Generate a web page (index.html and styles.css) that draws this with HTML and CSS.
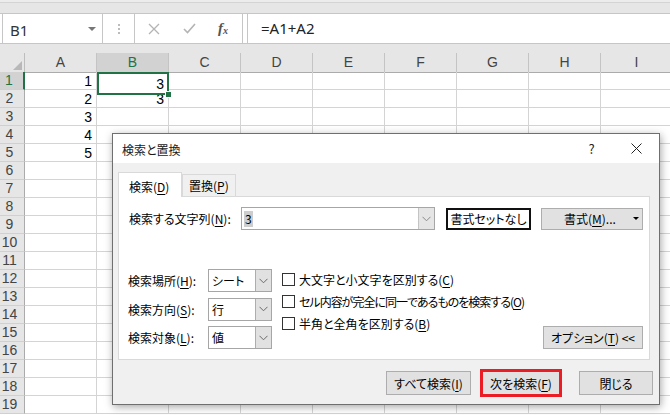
FILE: index.html
```html
<!DOCTYPE html>
<html lang="ja">
<head>
<meta charset="utf-8">
<link rel="stylesheet" href="styles.css">
</head>
<body>
<div class="topstrip"></div>
<div class="fbar">
  <div class="namebox"><span class="nb-text">B1</span><span class="nb-arrow"></span></div>
  <div class="dots"><span></span><span></span><span></span></div>
  <div class="fxbox">
    <svg class="ico" width="12" height="12" viewBox="0 0 12 12"><path d="M1 1L11 11M11 1L1 11" stroke="#b4b4b4" stroke-width="1.3" fill="none"/></svg>
    <svg class="ico" width="13" height="11" viewBox="0 0 13 11"><path d="M1 6L4.5 9.5L12 1" stroke="#b4b4b4" stroke-width="1.6" fill="none"/></svg>
    <span class="fx">f<sub>x</sub></span>
  </div>
  <div class="formula">=A1+A2</div>
</div>
<div class="gapband"></div>
<div class="colhead">
  <div class="corner"><span class="tri"></span></div>
  <div class="ch">A</div><div class="ch on">B</div><div class="ch">C</div><div class="ch">D</div><div class="ch">E</div><div class="ch">F</div><div class="ch">G</div><div class="ch">H</div><div class="ch">I</div>
</div>
<div class="sheet">
  <div class="rh on">1</div><div class="c">1</div><div class="c sel">3<span class="selbox"></span><span class="handle"></span></div><div class="c"></div><div class="c"></div><div class="c"></div><div class="c"></div><div class="c"></div><div class="c"></div><div class="c"></div>
  <div class="rh">2</div><div class="c">2</div><div class="c">3</div><div class="c"></div><div class="c"></div><div class="c"></div><div class="c"></div><div class="c"></div><div class="c"></div><div class="c"></div>
  <div class="rh">3</div><div class="c">3</div><div class="c"></div><div class="c"></div><div class="c"></div><div class="c"></div><div class="c"></div><div class="c"></div><div class="c"></div><div class="c"></div>
  <div class="rh">4</div><div class="c">4</div><div class="c"></div><div class="c"></div><div class="c"></div><div class="c"></div><div class="c"></div><div class="c"></div><div class="c"></div><div class="c"></div>
  <div class="rh">5</div><div class="c">5</div><div class="c"></div><div class="c"></div><div class="c"></div><div class="c"></div><div class="c"></div><div class="c"></div><div class="c"></div><div class="c"></div>
  <div class="rh">6</div><div class="c"></div><div class="c"></div><div class="c"></div><div class="c"></div><div class="c"></div><div class="c"></div><div class="c"></div><div class="c"></div><div class="c"></div>
  <div class="rh">7</div><div class="c"></div><div class="c"></div><div class="c"></div><div class="c"></div><div class="c"></div><div class="c"></div><div class="c"></div><div class="c"></div><div class="c"></div>
  <div class="rh">8</div><div class="c"></div><div class="c"></div><div class="c"></div><div class="c"></div><div class="c"></div><div class="c"></div><div class="c"></div><div class="c"></div><div class="c"></div>
  <div class="rh">9</div><div class="c"></div><div class="c"></div><div class="c"></div><div class="c"></div><div class="c"></div><div class="c"></div><div class="c"></div><div class="c"></div><div class="c"></div>
  <div class="rh">10</div><div class="c"></div><div class="c"></div><div class="c"></div><div class="c"></div><div class="c"></div><div class="c"></div><div class="c"></div><div class="c"></div><div class="c"></div>
  <div class="rh">11</div><div class="c"></div><div class="c"></div><div class="c"></div><div class="c"></div><div class="c"></div><div class="c"></div><div class="c"></div><div class="c"></div><div class="c"></div>
  <div class="rh">12</div><div class="c"></div><div class="c"></div><div class="c"></div><div class="c"></div><div class="c"></div><div class="c"></div><div class="c"></div><div class="c"></div><div class="c"></div>
  <div class="rh">13</div><div class="c"></div><div class="c"></div><div class="c"></div><div class="c"></div><div class="c"></div><div class="c"></div><div class="c"></div><div class="c"></div><div class="c"></div>
  <div class="rh">14</div><div class="c"></div><div class="c"></div><div class="c"></div><div class="c"></div><div class="c"></div><div class="c"></div><div class="c"></div><div class="c"></div><div class="c"></div>
  <div class="rh">15</div><div class="c"></div><div class="c"></div><div class="c"></div><div class="c"></div><div class="c"></div><div class="c"></div><div class="c"></div><div class="c"></div><div class="c"></div>
  <div class="rh">16</div><div class="c"></div><div class="c"></div><div class="c"></div><div class="c"></div><div class="c"></div><div class="c"></div><div class="c"></div><div class="c"></div><div class="c"></div>
  <div class="rh">17</div><div class="c"></div><div class="c"></div><div class="c"></div><div class="c"></div><div class="c"></div><div class="c"></div><div class="c"></div><div class="c"></div><div class="c"></div>
  <div class="rh">18</div><div class="c"></div><div class="c"></div><div class="c"></div><div class="c"></div><div class="c"></div><div class="c"></div><div class="c"></div><div class="c"></div><div class="c"></div>
  <div class="rh">19</div><div class="c"></div><div class="c"></div><div class="c"></div><div class="c"></div><div class="c"></div><div class="c"></div><div class="c"></div><div class="c"></div><div class="c"></div>
</div>

<div class="dialog">
  <div class="titlebar">
    <span class="title">検索と置換</span>
    <span class="help">?</span>
    <span class="close"><svg width="11" height="11" viewBox="0 0 11 11"><path d="M0.5 0.5L10.5 10.5M10.5 0.5L0.5 10.5" stroke="#222" stroke-width="1" fill="none"/></svg></span>
  </div>
  <div class="dbody">
    <div class="tabs">
      <div class="tab active">検索(<u>D</u>)</div>
      <div class="tab">置換(<u>P</u>)</div>
    </div>
    <div class="panel">
      <div class="findrow">
        <span class="lbl findlbl">検索する文字列(<u>N</u>):</span>
        <div class="combo">
          <span class="combo-val"><span class="hl">3</span></span>
          <span class="ddbtn"><svg width="9" height="6" viewBox="0 0 9 6"><path d="M0.5 0.8L4.5 4.8L8.5 0.8" stroke="#8a8a8a" stroke-width="1" fill="none"/></svg></span>
        </div>
        <div class="btn nofmt">書式セットなし</div>
        <div class="btn fmt"><span>書式(<u>M</u>)...</span><span class="caret"></span></div>
      </div>
      <div class="opts">
        <div class="selgrid">
          <span class="lbl">検索場所(<u>H</u>):</span>
          <div class="sel"><span class="sel-val">シート</span><span class="ddbtn"><svg width="9" height="6" viewBox="0 0 9 6"><path d="M0.5 0.8L4.5 4.8L8.5 0.8" stroke="#6a6a6a" stroke-width="1" fill="none"/></svg></span></div>
          <span class="lbl">検索方向(<u>S</u>):</span>
          <div class="sel"><span class="sel-val">行</span><span class="ddbtn"><svg width="9" height="6" viewBox="0 0 9 6"><path d="M0.5 0.8L4.5 4.8L8.5 0.8" stroke="#6a6a6a" stroke-width="1" fill="none"/></svg></span></div>
          <span class="lbl">検索対象(<u>L</u>):</span>
          <div class="sel"><span class="sel-val">値</span><span class="ddbtn"><svg width="9" height="6" viewBox="0 0 9 6"><path d="M0.5 0.8L4.5 4.8L8.5 0.8" stroke="#6a6a6a" stroke-width="1" fill="none"/></svg></span></div>
        </div>
        <div class="checks">
          <div class="chk"><span class="box"></span><span>大文字と小文字を区別する(<u>C</u>)</span></div>
          <div class="chk"><span class="box"></span><span class="tight">セル内容が完全に同一であるものを検索する(<u>O</u>)</span></div>
          <div class="chk"><span class="box"></span><span>半角と全角を区別する(<u>B</u>)</span></div>
        </div>
        <div class="btn optbtn">オプション(<u>T</u>) &lt;&lt;</div>
      </div>
    </div>
    <div class="actions">
      <div class="btn allbtn">すべて検索(<u>I</u>)</div>
      <div class="btn nextbtn">次を検索(<u>F</u>)</div>
      <div class="btn closebtn">閉じる</div>
    </div>
  </div>
</div>
</body>
</html>
```
FILE: styles.css
```css
html, body {
  margin: 0;
  padding: 0;
}
body {
  width: 670px;
  height: 415px;
  overflow: hidden;
  position: relative;
  background: #fff;
  font-family: "Noto Sans CJK JP", "Noto Sans", sans-serif;
  color: #000;
}

/* top strip */
.topstrip {
  height: 13px;
  background: linear-gradient(#ececec 0 2px, #d4d4d4 2px 3px, #e6e6e6 3px);
}

/* formula bar */
.fbar {
  display: flex;
  height: 31px;
  box-sizing: border-box;
  border-top: 1px solid #c6c6c6;
  border-bottom: 1px solid #c6c6c6;
  background: #fff;
}
.namebox {
  margin-left: 2px;
  width: 101px;
  box-sizing: border-box;
  border-left: 1px solid #c6c6c6;
  border-right: 1px solid #c6c6c6;
  display: flex;
  align-items: center;
  padding: 0 0 0 7px;
}
.nb-text {
  font-family: "Noto Sans", sans-serif;
  font-size: 15px;
  color: #333;
  margin-top: 2px;
}
.nb-arrow {
  margin-left: auto;
  margin-right: 6px;
  width: 0;
  height: 0;
  border-left: 4px solid transparent;
  border-right: 4px solid transparent;
  border-top: 4px solid #777;
}
.dots {
  width: 31px;
  display: flex;
  flex-direction: column;
  align-items: center;
  justify-content: center;
  gap: 2px;
}
.dots span {
  width: 2px;
  height: 2px;
  background: #bcbcbc;
}
.fxbox {
  width: 109px;
  box-sizing: border-box;
  border-left: 1px solid #c6c6c6;
  border-right: 1px solid #c6c6c6;
  display: flex;
  align-items: center;
  padding-left: 13px;
}
.fxbox .ico:first-child { margin-right: 23px; }
.fxbox .ico:nth-child(2) { margin-right: 22px; }
.fx {
  font-family: "Liberation Serif", serif;
  font-style: italic;
  font-size: 15px;
  color: #555;
  font-weight: bold;
}
.fx sub {
  font-size: 10px;
  vertical-align: -1px;
}
.formula {
  margin-left: 4px;
  flex: 1;
  border-left: 1px solid #c6c6c6;
  padding-left: 13px;
  font-family: "Noto Sans", sans-serif;
  font-size: 15px;
  color: #222;
  line-height: 29px;
}

.gapband {
  height: 9px;
  background: #e6e6e6;
}

/* column headers */
.colhead {
  display: grid;
  grid-template-columns: 25px repeat(9, 72px);
  height: 19px;
  background: #e6e6e6;
}
.corner {
  box-sizing: border-box;
  border-right: 1px solid #bdbdbd;
  border-bottom: 1px solid #ababab;
  display: flex;
  justify-content: flex-end;
  align-items: flex-end;
  padding: 0 2px 2px 0;
}
.tri {
  width: 0;
  height: 0;
  border-left: 9px solid transparent;
  border-bottom: 9px solid #b8b8b8;
}
.ch {
  box-sizing: border-box;
  border-right: 1px solid #c4c4c4;
  border-bottom: 1px solid #ababab;
  text-align: center;
  font-family: "Liberation Sans", sans-serif;
  font-size: 14px;
  line-height: 19px;
  color: #444;
}
.ch.on {
  background: #d2d2d2;
  color: #217346;
  border-bottom-color: #217346;
}

/* sheet */
.sheet {
  display: grid;
  grid-template-columns: 25px repeat(9, 72px);
  grid-auto-rows: 18px;
}
.rh {
  box-sizing: border-box;
  background: #e6e6e6;
  border-right: 1px solid #ababab;
  border-bottom: 1px solid #d0d0d0;
  text-align: center;
  padding-right: 5px;
  font-family: "Liberation Sans", sans-serif;
  font-size: 14px;
  line-height: 17px;
  color: #444;
}
.rh.on {
  background: #d2d2d2;
  color: #217346;
  border-right: 2px solid #217346;
}
.c {
  box-sizing: border-box;
  border-right: 1px solid #d4d4d4;
  border-bottom: 1px solid #d4d4d4;
  display: flex;
  justify-content: flex-end;
  align-items: center;
  padding-right: 4px;
  font-family: "Liberation Sans", sans-serif;
  font-size: 14px;
  color: #000;
}
.c.sel {
  position: relative;
}
.selbox {
  position: absolute;
  left: -1px;
  top: -1px;
  right: -1px;
  bottom: -1px;
  border: 2px solid #217346;
}
.handle {
  position: absolute;
  right: -4px;
  bottom: -4px;
  width: 5px;
  height: 5px;
  background: #217346;
  border: 1px solid #fff;
  z-index: 2;
}

/* dialog */
.dialog {
  position: absolute;
  left: 112px;
  top: 133px;
  width: 548px;
  height: 272px;
  box-sizing: border-box;
  border: 1px solid #6f6f6f;
  background: #f0f0f0;
  box-shadow: 1px 2px 8px rgba(0, 0, 0, 0.35);
  display: flex;
  flex-direction: column;
  font-size: 12px;
  color: #000;
  font-feature-settings: "palt";
}
.titlebar {
  height: 29px;
  background: #fff;
  display: flex;
  align-items: center;
  padding-left: 9px;
}
.title {
  font-size: 12px;
  color: #1a1a1a;
  margin-top: 1px;
}
.help {
  margin-left: auto;
  width: 45px;
  text-align: center;
  font-size: 13px;
  color: #222;
}
.close {
  width: 45px;
  display: flex;
  justify-content: center;
  align-items: center;
}
.dbody {
  padding: 9px 9px 0 5px;
  display: flex;
  flex-direction: column;
}
u {
  text-decoration: underline;
  text-underline-offset: 2px;
}
.tabs {
  display: flex;
  height: 24px;
  align-items: flex-start;
}
.tab {
  box-sizing: border-box;
  border: 1px solid #d9d9d9;
  border-bottom: none;
  background: #f0f0f0;
  height: 22px;
  margin-top: 2px;
  line-height: 21px;
  padding: 0 0 0 6px;
  width: 54px;
  font-size: 12px;
}
.tab.active {
  position: relative;
  z-index: 1;
  background: #fff;
  height: 25px;
  margin-top: 0;
  width: 64px;
  padding-left: 10px;
  line-height: 27px;
}
.panel {
  box-sizing: border-box;
  height: 164px;
  background: #fff;
  border: 1px solid #d9d9d9;
  padding: 10px 6px 10px 10px;
  display: flex;
  flex-direction: column;
}
.findrow {
  display: flex;
  align-items: center;
  height: 23px;
}
.lbl {
  font-size: 12px;
  white-space: nowrap;
}
.findlbl {
  width: 112px;
}
.combo {
  width: 194px;
  height: 23px;
  box-sizing: border-box;
  border: 1px solid #a6a6a6;
  display: flex;
  background: #fff;
}
.combo-val {
  flex: 1;
  padding-left: 2px;
  display: flex;
  align-items: center;
  font-size: 12px;
}
.hl {
  background: #cdcdcd;
  padding: 0 1px;
  line-height: 16px;
}
.ddbtn {
  width: 16px;
  box-sizing: border-box;
  border-left: 1px solid #c4c4c4;
  background: #e5e5e5;
  display: flex;
  align-items: center;
  justify-content: center;
}
.btn {
  box-sizing: border-box;
  height: 23px;
  background: #e1e1e1;
  border: 1px solid #adadad;
  display: flex;
  align-items: center;
  justify-content: center;
  font-size: 12px;
  white-space: nowrap;
}
.nofmt {
  margin-left: 11px;
  width: 85px;
  height: 22px;
  background: #fff;
  border: 2px solid #111;
}
.fmt {
  margin-left: 10px;
  width: 102px;
  height: 22px;
  justify-content: flex-start;
  padding-left: 22px;
}
.caret {
  margin-left: auto;
  margin-right: 3px;
  width: 0;
  height: 0;
  border-left: 3px solid transparent;
  border-right: 3px solid transparent;
  border-top: 3px solid #000;
}
.opts {
  margin-top: 39px;
  height: 80px;
  display: flex;
  align-items: flex-start;
}
.selgrid {
  display: grid;
  grid-template-columns: 80px 64px;
  grid-auto-rows: 23px;
  row-gap: 5.5px;
  align-items: center;
  margin-left: -1px;
}
.sel {
  height: 23px;
  box-sizing: border-box;
  border: 1px solid #a6a6a6;
  display: flex;
  background: #fff;
}
.sel-val {
  flex: 1;
  padding-left: 3px;
  display: flex;
  align-items: center;
  font-size: 12px;
}
.sel .ddbtn {
  border-left: 1px solid #adadad;
  background: #e1e1e1;
}
.checks {
  margin-left: 10px;
  margin-top: -1px;
  display: flex;
  flex-direction: column;
}
.chk {
  height: 22px;
  display: flex;
  align-items: center;
  font-size: 12px;
  white-space: nowrap;
}
.tight {
  letter-spacing: -1px;
}
.box {
  width: 13px;
  height: 13px;
  box-sizing: border-box;
  border: 1px solid #333;
  background: #fff;
  margin-right: 4px;
}
.optbtn {
  margin-left: auto;
  align-self: flex-end;
  width: 100px;
}
.actions {
  margin-top: 9px;
  margin-right: -3px;
  height: 28px;
  display: flex;
  align-items: center;
  justify-content: flex-end;
}
.allbtn {
  width: 85px;
  height: 24px;
}
.nextbtn {
  margin-left: 9px;
  width: 82px;
  height: 28px;
  border: 3px solid #ec1c24;
}
.closebtn {
  margin-left: 17px;
  width: 74px;
  height: 24px;
}
```
